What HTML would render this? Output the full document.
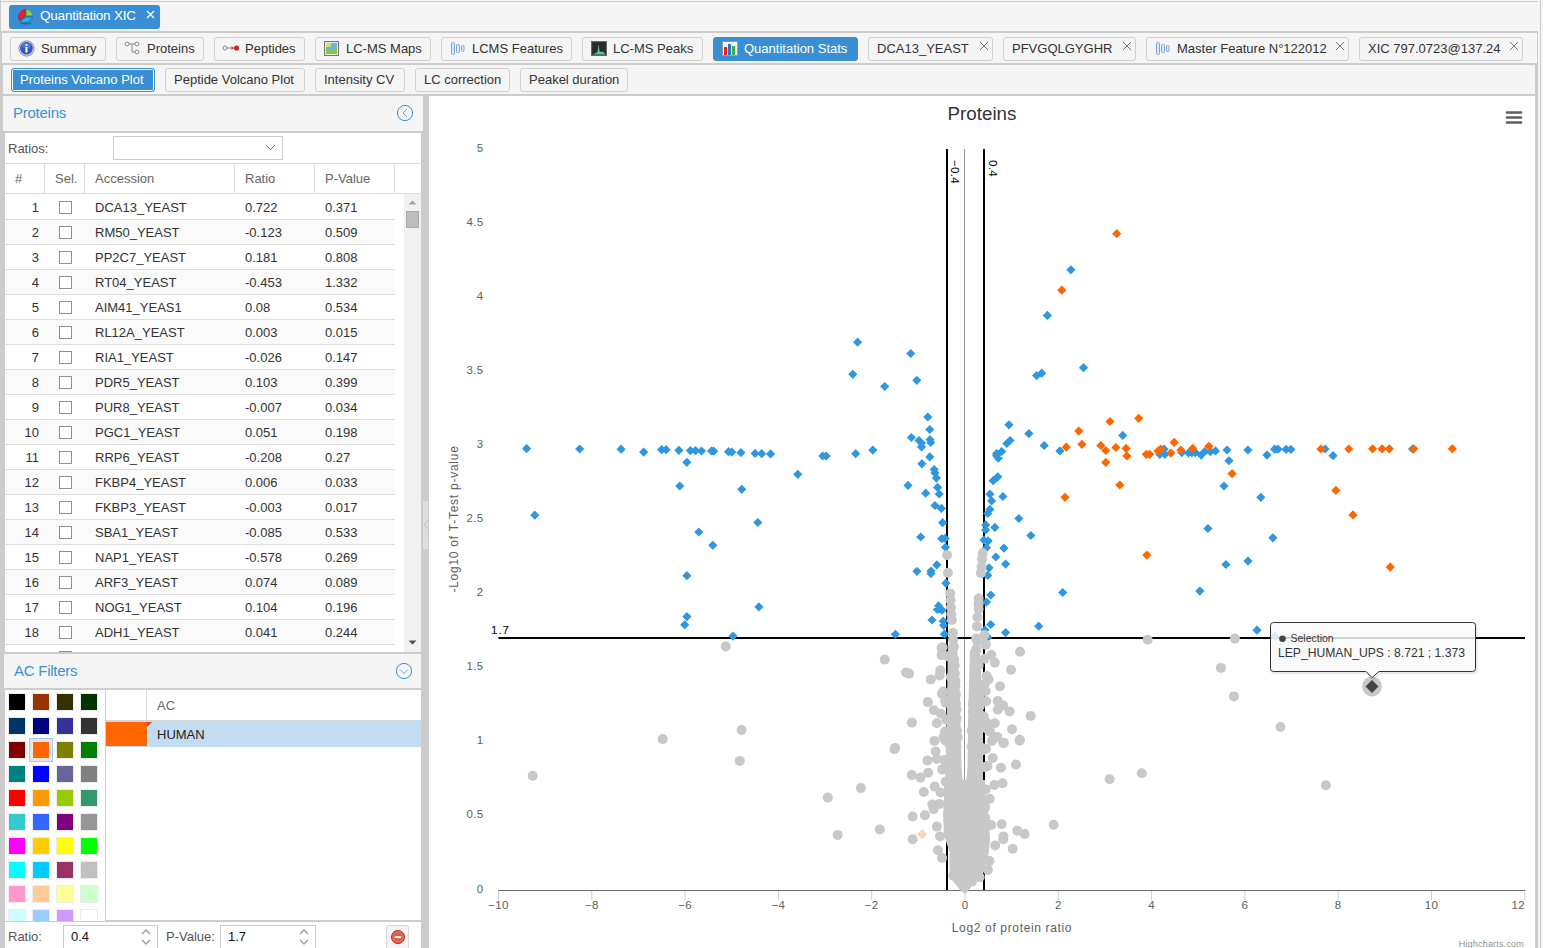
<!DOCTYPE html><html><head><meta charset="utf-8"><style>
*{box-sizing:border-box;margin:0;padding:0}
body{width:1543px;height:948px;overflow:hidden;background:#f5f5f5;font-family:"Liberation Sans",sans-serif;font-size:13px;color:#333;position:relative}
.a{position:absolute}
.btn{position:absolute;height:24px;border:1px solid #d0d0d0;border-radius:3px;background:#f5f5f5;line-height:22px;white-space:nowrap;color:#333}
.btn .t{position:absolute;top:0}
.sel{background:#3a8fd4;border-color:#3a8fd4;color:#fff}
.hl{position:absolute;background:#cccccc}
.row{position:absolute;left:5px;width:390px;height:25px;border-bottom:1px solid #dedede;line-height:26px;white-space:nowrap}
.cb{position:absolute;left:54px;top:6px;width:13px;height:13px;border:1px solid #8f8f8f;background:#fff}
.sw{position:absolute;width:16px;height:16px;box-shadow:0 0 0 1px #ececec}
.ph{position:absolute;color:#3892d3;font-size:15px;letter-spacing:-0.25px}
</style></head><body>

<div class="hl" style="left:0;top:1px;width:1538px;height:1px"></div>
<div class="hl" style="left:1540px;top:0;width:1px;height:948px"></div>
<div class="hl" style="left:0;top:0;width:1px;height:948px"></div>
<div class="hl" style="left:0;top:31px;width:1538px;height:2px"></div>
<div class="hl" style="left:1px;top:33px;width:1px;height:915px"></div>
<div class="hl" style="left:1537px;top:33px;width:1px;height:915px"></div>
<div class="hl" style="left:1px;top:63px;width:1536px;height:2px"></div>
<div class="hl" style="left:2px;top:65px;width:1px;height:883px"></div>
<div class="hl" style="left:1535px;top:65px;width:3px;height:883px"></div>
<div class="hl" style="left:2px;top:94px;width:1534px;height:2px"></div>
<div class="a" style="left:9px;top:5px;width:151px;height:24px;background:#3a8fd4;border-radius:3px"></div>
<svg class="a" style="left:17px;top:8px" width="18" height="18" viewBox="0 0 18 18">
<ellipse cx="9" cy="15.5" rx="6" ry="1.2" fill="#1d5e95" opacity=".6"/>
<path d="M8.2 1.2 L8.2 8.2 L2.2 12.6 C0.6 9.5 1.5 3.5 8.2 1.2Z" fill="#e8202a" stroke="#a10d14" stroke-width=".6"/>
<path d="M9.2 1.3 L9.2 7.8 L15.6 7.8 C15.3 4.6 13 2 9.2 1.3Z" fill="#8fd14f" stroke="#3c8d1b" stroke-width=".6"/>
<path d="M3 13.6 L9.2 9 L15.6 9 C14.8 13.3 8 16.4 3 13.6Z" fill="#2fb0e6" stroke="#0b5a9c" stroke-width=".7"/>
</svg>
<div class="a" style="left:40px;top:4px;height:24px;line-height:24px;color:#fff;font-size:13.5px;letter-spacing:-0.2px">Quantitation XIC</div>
<svg class="a" style="left:146px;top:10px" width="9" height="9" viewBox="0 0 9 9"><path d="M1 1L8 8M8 1L1 8" stroke="#fff" stroke-width="1.2"/></svg>

<div class="btn" style="left:10px;top:37px;width:96px"><span class="t" style="left:30px">Summary</span></div>
<svg class="a" style="left:18px;top:40px" width="17" height="17" viewBox="0 0 17 17"><circle cx="8.5" cy="8.5" r="7.6" fill="#ddd" stroke="#888" stroke-width="1"/><circle cx="8.5" cy="8.3" r="6.3" fill="#2f55c8"/><ellipse cx="8.5" cy="5.5" rx="4.5" ry="2.6" fill="#5f86e8" opacity=".7"/><rect x="7.5" y="7" width="2" height="5.5" fill="#fff"/><circle cx="8.5" cy="5" r="1.1" fill="#fff"/></svg>
<div class="btn" style="left:116px;top:37px;width:88px"><span class="t" style="left:30px">Proteins</span></div>
<svg class="a" style="left:124px;top:41px" width="17" height="15" viewBox="0 0 17 15"><g fill="#fff" stroke="#888" stroke-width="1"><circle cx="3" cy="3" r="2"/><circle cx="13" cy="3" r="2"/><circle cx="13" cy="11" r="2"/></g><path d="M5 3H11M8 3V11H11" stroke="#888" fill="none" stroke-width="1"/></svg>
<div class="btn" style="left:214px;top:37px;width:91px"><span class="t" style="left:30px">Peptides</span></div>
<svg class="a" style="left:222px;top:43px" width="18" height="10" viewBox="0 0 18 10"><circle cx="3" cy="5" r="2" fill="#fff" stroke="#888"/><path d="M5 5H11" stroke="#888"/><path d="M9.5 3L12 5L9.5 7Z" fill="#c33"/><circle cx="14.5" cy="5" r="2.6" fill="#d42020"/></svg>
<div class="btn" style="left:315px;top:37px;width:116px"><span class="t" style="left:30px">LC-MS Maps</span></div>
<svg class="a" style="left:324px;top:41px" width="15" height="15" viewBox="0 0 15 15"><rect x=".5" y=".5" width="14" height="14" fill="#e8e8e8" stroke="#777"/><rect x="2" y="2" width="11" height="11" fill="#6cb4e0"/><path d="M2 9 L5 7 L9 10 L13 6 V13 H2Z" fill="#8bc34a"/><rect x="2" y="2" width="5" height="4" fill="#c9e27a"/></svg>
<div class="btn" style="left:441px;top:37px;width:131px"><span class="t" style="left:30px">LCMS Features</span></div>
<svg class="a" style="left:450px;top:41px" width="15" height="15" viewBox="0 0 15 15"><g fill="#dbe8f7" stroke="#7aa3d6" stroke-width="1"><rect x="1.5" y="1.5" width="3" height="12" rx="1"/><rect x="6.5" y="3.5" width="3" height="8" rx="1"/><rect x="11.5" y="4.5" width="2.5" height="6" rx="1"/></g></svg>
<div class="btn" style="left:582px;top:37px;width:121px"><span class="t" style="left:30px">LC-MS Peaks</span></div>
<svg class="a" style="left:591px;top:41px" width="16" height="15" viewBox="0 0 16 15"><rect x=".5" y=".5" width="15" height="14" fill="#3a3a3a" stroke="#666"/><rect x="1.5" y="1.5" width="13" height="12" fill="#2a2a2a"/><path d="M1.5 13.5 L5 12 L6.5 11 L7.5 3 L8.5 10 L10 11 L12 10.5 L14.5 13.5Z" fill="#4fc9a0"/></svg>
<div class="btn sel" style="left:713px;top:37px;width:145px"><span class="t" style="left:30px">Quantitation Stats</span></div>
<svg class="a" style="left:722px;top:41px" width="16" height="15" viewBox="0 0 16 15"><rect x=".5" y=".5" width="15" height="14" fill="#f7f3e8" stroke="#9a9a9a"/><rect x="2" y="6" width="3" height="8" fill="#e02424"/><rect x="6" y="3" width="3" height="11" fill="#2f6fd0"/><rect x="10" y="5" width="3" height="9" fill="#32b54a"/></svg>
<div class="btn" style="left:868px;top:37px;width:125px"><span class="t" style="left:8px">DCA13_YEAST</span><svg class="a" style="left:110px;top:3px" width="10" height="10" viewBox="0 0 10 10"><path d="M1 1L9 9M9 1L1 9" stroke="#666" stroke-width="0.9"/></svg></div>
<div class="btn" style="left:1003px;top:37px;width:133px"><span class="t" style="left:8px">PFVGQLGYGHR</span><svg class="a" style="left:118px;top:3px" width="10" height="10" viewBox="0 0 10 10"><path d="M1 1L9 9M9 1L1 9" stroke="#666" stroke-width="0.9"/></svg></div>
<div class="btn" style="left:1146px;top:37px;width:203px"><span class="t" style="left:30px">Master Feature N°122012</span><svg class="a" style="left:188px;top:3px" width="10" height="10" viewBox="0 0 10 10"><path d="M1 1L9 9M9 1L1 9" stroke="#666" stroke-width="0.9"/></svg></div>
<svg class="a" style="left:1155px;top:41px" width="15" height="15" viewBox="0 0 15 15"><g fill="#dbe8f7" stroke="#7aa3d6" stroke-width="1"><rect x="1.5" y="1.5" width="3" height="12" rx="1"/><rect x="6.5" y="3.5" width="3" height="8" rx="1"/><rect x="11.5" y="4.5" width="2.5" height="6" rx="1"/></g></svg>
<div class="btn" style="left:1359px;top:37px;width:164px"><span class="t" style="left:8px">XIC 797.0723@137.24</span><svg class="a" style="left:149px;top:3px" width="10" height="10" viewBox="0 0 10 10"><path d="M1 1L9 9M9 1L1 9" stroke="#666" stroke-width="0.9"/></svg></div>
<div class="a" style="left:11px;top:68px;width:144px;height:24px;border:1px solid #3a8fd4;border-radius:3px;background:#3a8fd4;box-shadow:inset 0 0 0 1px #fff"><div class="a" style="left:1px;top:1px;right:1px;bottom:1px;background:#3a8fd4;border-radius:1px"></div><span class="a" style="left:8px;top:0;line-height:22px;color:#fff">Proteins Volcano Plot</span></div>
<div class="btn" style="left:165px;top:68px;width:140px"><span class="t" style="left:8px">Peptide Volcano Plot</span></div>
<div class="btn" style="left:315px;top:68px;width:90px"><span class="t" style="left:8px">Intensity CV</span></div>
<div class="btn" style="left:415px;top:68px;width:95px"><span class="t" style="left:8px">LC correction</span></div>
<div class="btn" style="left:520px;top:68px;width:108px"><span class="t" style="left:8px">Peakel duration</span></div>
<div class="a" style="left:3px;top:96px;width:420px;height:35px;background:#f5f5f5"></div>
<div class="ph" style="left:13px;top:104px">Proteins</div>
<svg class="a" style="left:396px;top:104px" width="18" height="18" viewBox="0 0 18 18"><circle cx="9" cy="9" r="7.6" fill="none" stroke="#3a8fd4" stroke-width="1"/><path d="M11 5 L7 9 L11 13" fill="none" stroke="#4a94d6" stroke-width="0.8"/></svg>
<div class="hl" style="left:3px;top:131px;width:420px;height:2px"></div>
<div class="hl" style="left:421px;top:131px;width:8px;height:817px"></div>
<div class="hl" style="left:423px;top:96px;width:6px;height:36px"></div>
<div class="a" style="left:423px;top:501px;width:5px;height:48px;background:#dedede"></div>
<svg class="a" style="left:424px;top:520px" width="4" height="9"><path d="M3.5 0.5L0.5 4.5L3.5 8.5" fill="none" stroke="#aaa" stroke-width="0.8"/></svg>
<div class="hl" style="left:3px;top:131px;width:2px;height:817px"></div>
<div class="a" style="left:5px;top:133px;width:416px;height:519px;background:#fff"></div>
<div class="a" style="left:8px;top:133px;line-height:31px;color:#555">Ratios:</div>
<div class="a" style="left:113px;top:136px;width:170px;height:24px;border:1px solid #ccc;background:#fff"></div>
<svg class="a" style="left:265px;top:144px" width="11" height="7" viewBox="0 0 11 7"><path d="M1 1 L5.5 5.5 L10 1" fill="none" stroke="#777" stroke-width="1"/></svg>
<div class="hl" style="left:5px;top:163px;width:416px;height:1px;background:#dcdcdc"></div>
<div class="hl" style="left:5px;top:193px;width:416px;height:1px;background:#dcdcdc"></div>
<div class="hl" style="left:44px;top:164px;width:1px;height:29px;background:#dcdcdc"></div>
<div class="hl" style="left:84px;top:164px;width:1px;height:29px;background:#dcdcdc"></div>
<div class="hl" style="left:234px;top:164px;width:1px;height:29px;background:#dcdcdc"></div>
<div class="hl" style="left:314px;top:164px;width:1px;height:29px;background:#dcdcdc"></div>
<div class="hl" style="left:394px;top:164px;width:1px;height:29px;background:#dcdcdc"></div>
<div class="a" style="left:15px;top:164px;line-height:29px;color:#666">#</div>
<div class="a" style="left:55px;top:164px;line-height:29px;color:#666">Sel.</div>
<div class="a" style="left:95px;top:164px;line-height:29px;color:#666">Accession</div>
<div class="a" style="left:245px;top:164px;line-height:29px;color:#666">Ratio</div>
<div class="a" style="left:325px;top:164px;line-height:29px;color:#666">P-Value</div>
<div class="a" style="left:5px;top:195px;width:399px;height:457px;overflow:hidden">
<div class="row" style="left:0;top:0px;background:#fff"><span class="a" style="right:356px;top:0">1</span><div class="cb"></div><span class="a" style="left:90px">DCA13_YEAST</span><span class="a" style="left:240px">0.722</span><span class="a" style="left:320px">0.371</span></div>
<div class="row" style="left:0;top:25px;background:#fafafa"><span class="a" style="right:356px;top:0">2</span><div class="cb"></div><span class="a" style="left:90px">RM50_YEAST</span><span class="a" style="left:240px">-0.123</span><span class="a" style="left:320px">0.509</span></div>
<div class="row" style="left:0;top:50px;background:#fff"><span class="a" style="right:356px;top:0">3</span><div class="cb"></div><span class="a" style="left:90px">PP2C7_YEAST</span><span class="a" style="left:240px">0.181</span><span class="a" style="left:320px">0.808</span></div>
<div class="row" style="left:0;top:75px;background:#fafafa"><span class="a" style="right:356px;top:0">4</span><div class="cb"></div><span class="a" style="left:90px">RT04_YEAST</span><span class="a" style="left:240px">-0.453</span><span class="a" style="left:320px">1.332</span></div>
<div class="row" style="left:0;top:100px;background:#fff"><span class="a" style="right:356px;top:0">5</span><div class="cb"></div><span class="a" style="left:90px">AIM41_YEAS1</span><span class="a" style="left:240px">0.08</span><span class="a" style="left:320px">0.534</span></div>
<div class="row" style="left:0;top:125px;background:#fafafa"><span class="a" style="right:356px;top:0">6</span><div class="cb"></div><span class="a" style="left:90px">RL12A_YEAST</span><span class="a" style="left:240px">0.003</span><span class="a" style="left:320px">0.015</span></div>
<div class="row" style="left:0;top:150px;background:#fff"><span class="a" style="right:356px;top:0">7</span><div class="cb"></div><span class="a" style="left:90px">RIA1_YEAST</span><span class="a" style="left:240px">-0.026</span><span class="a" style="left:320px">0.147</span></div>
<div class="row" style="left:0;top:175px;background:#fafafa"><span class="a" style="right:356px;top:0">8</span><div class="cb"></div><span class="a" style="left:90px">PDR5_YEAST</span><span class="a" style="left:240px">0.103</span><span class="a" style="left:320px">0.399</span></div>
<div class="row" style="left:0;top:200px;background:#fff"><span class="a" style="right:356px;top:0">9</span><div class="cb"></div><span class="a" style="left:90px">PUR8_YEAST</span><span class="a" style="left:240px">-0.007</span><span class="a" style="left:320px">0.034</span></div>
<div class="row" style="left:0;top:225px;background:#fafafa"><span class="a" style="right:356px;top:0">10</span><div class="cb"></div><span class="a" style="left:90px">PGC1_YEAST</span><span class="a" style="left:240px">0.051</span><span class="a" style="left:320px">0.198</span></div>
<div class="row" style="left:0;top:250px;background:#fff"><span class="a" style="right:356px;top:0">11</span><div class="cb"></div><span class="a" style="left:90px">RRP6_YEAST</span><span class="a" style="left:240px">-0.208</span><span class="a" style="left:320px">0.27</span></div>
<div class="row" style="left:0;top:275px;background:#fafafa"><span class="a" style="right:356px;top:0">12</span><div class="cb"></div><span class="a" style="left:90px">FKBP4_YEAST</span><span class="a" style="left:240px">0.006</span><span class="a" style="left:320px">0.033</span></div>
<div class="row" style="left:0;top:300px;background:#fff"><span class="a" style="right:356px;top:0">13</span><div class="cb"></div><span class="a" style="left:90px">FKBP3_YEAST</span><span class="a" style="left:240px">-0.003</span><span class="a" style="left:320px">0.017</span></div>
<div class="row" style="left:0;top:325px;background:#fafafa"><span class="a" style="right:356px;top:0">14</span><div class="cb"></div><span class="a" style="left:90px">SBA1_YEAST</span><span class="a" style="left:240px">-0.085</span><span class="a" style="left:320px">0.533</span></div>
<div class="row" style="left:0;top:350px;background:#fff"><span class="a" style="right:356px;top:0">15</span><div class="cb"></div><span class="a" style="left:90px">NAP1_YEAST</span><span class="a" style="left:240px">-0.578</span><span class="a" style="left:320px">0.269</span></div>
<div class="row" style="left:0;top:375px;background:#fafafa"><span class="a" style="right:356px;top:0">16</span><div class="cb"></div><span class="a" style="left:90px">ARF3_YEAST</span><span class="a" style="left:240px">0.074</span><span class="a" style="left:320px">0.089</span></div>
<div class="row" style="left:0;top:400px;background:#fff"><span class="a" style="right:356px;top:0">17</span><div class="cb"></div><span class="a" style="left:90px">NOG1_YEAST</span><span class="a" style="left:240px">0.104</span><span class="a" style="left:320px">0.196</span></div>
<div class="row" style="left:0;top:425px;background:#fafafa"><span class="a" style="right:356px;top:0">18</span><div class="cb"></div><span class="a" style="left:90px">ADH1_YEAST</span><span class="a" style="left:240px">0.041</span><span class="a" style="left:320px">0.244</span></div>
<div class="row" style="left:0;top:450px;background:#fff"><span class="a" style="right:356px;top:0"></span><div class="cb"></div><span class="a" style="left:90px"></span><span class="a" style="left:240px"></span><span class="a" style="left:320px"></span></div>
</div>
<div class="a" style="left:404px;top:194px;width:17px;height:458px;background:#f1f1f1"></div>
<svg class="a" style="left:408px;top:200px" width="9" height="5" viewBox="0 0 9 5"><path d="M0.5 4.5 L4.5 0.5 L8.5 4.5Z" fill="#a3a3a3"/></svg>
<svg class="a" style="left:408px;top:640px" width="9" height="5" viewBox="0 0 9 5"><path d="M0.5 0.5 L4.5 4.5 L8.5 0.5Z" fill="#505050"/></svg>
<div class="a" style="left:406px;top:211px;width:13px;height:17px;background:#bdbdbd;border:1px solid #a8a8a8"></div>
<div class="hl" style="left:3px;top:652px;width:420px;height:2px"></div>
<div class="a" style="left:4px;top:654px;width:417px;height:34px;background:#f5f5f5"></div>
<div class="ph" style="left:14px;top:662px">AC Filters</div>
<svg class="a" style="left:395px;top:662px" width="18" height="18" viewBox="0 0 18 18"><circle cx="9" cy="9" r="7.6" fill="none" stroke="#3a8fd4" stroke-width="1"/><path d="M5 7.5 L9 11.5 L13 7.5" fill="none" stroke="#4a94d6" stroke-width="0.8"/></svg>
<div class="hl" style="left:4px;top:688px;width:417px;height:2px"></div>
<div class="a" style="left:5px;top:690px;width:416px;height:231px;background:#fff"></div>
<div class="hl" style="left:105px;top:690px;width:1px;height:231px"></div>
<div class="a" style="left:5px;top:690px;width:100px;height:231px;overflow:hidden">
<div class="sw" style="left:4px;top:4px;background:#000000"></div>
<div class="sw" style="left:28px;top:4px;background:#993300"></div>
<div class="sw" style="left:52px;top:4px;background:#333300"></div>
<div class="sw" style="left:76px;top:4px;background:#003300"></div>
<div class="sw" style="left:4px;top:28px;background:#003366"></div>
<div class="sw" style="left:28px;top:28px;background:#000080"></div>
<div class="sw" style="left:52px;top:28px;background:#333399"></div>
<div class="sw" style="left:76px;top:28px;background:#333333"></div>
<div class="sw" style="left:4px;top:52px;background:#800000"></div>
<div class="a" style="left:24px;top:48px;width:24px;height:24px;border:1px solid #a9c9ef;background:#e6e6e6"></div>
<div class="sw" style="left:28px;top:52px;background:#FF6600"></div>
<div class="sw" style="left:52px;top:52px;background:#808000"></div>
<div class="sw" style="left:76px;top:52px;background:#008000"></div>
<div class="sw" style="left:4px;top:76px;background:#008080"></div>
<div class="sw" style="left:28px;top:76px;background:#0000FF"></div>
<div class="sw" style="left:52px;top:76px;background:#666699"></div>
<div class="sw" style="left:76px;top:76px;background:#808080"></div>
<div class="sw" style="left:4px;top:100px;background:#FF0000"></div>
<div class="sw" style="left:28px;top:100px;background:#FF9900"></div>
<div class="sw" style="left:52px;top:100px;background:#99CC00"></div>
<div class="sw" style="left:76px;top:100px;background:#339966"></div>
<div class="sw" style="left:4px;top:124px;background:#33CCCC"></div>
<div class="sw" style="left:28px;top:124px;background:#3366FF"></div>
<div class="sw" style="left:52px;top:124px;background:#800080"></div>
<div class="sw" style="left:76px;top:124px;background:#969696"></div>
<div class="sw" style="left:4px;top:148px;background:#FF00FF"></div>
<div class="sw" style="left:28px;top:148px;background:#FFCC00"></div>
<div class="sw" style="left:52px;top:148px;background:#FFFF00"></div>
<div class="sw" style="left:76px;top:148px;background:#00FF00"></div>
<div class="sw" style="left:4px;top:172px;background:#00FFFF"></div>
<div class="sw" style="left:28px;top:172px;background:#00CCFF"></div>
<div class="sw" style="left:52px;top:172px;background:#993366"></div>
<div class="sw" style="left:76px;top:172px;background:#C0C0C0"></div>
<div class="sw" style="left:4px;top:196px;background:#FF99CC"></div>
<div class="sw" style="left:28px;top:196px;background:#FFCC99"></div>
<div class="sw" style="left:52px;top:196px;background:#FFFF99"></div>
<div class="sw" style="left:76px;top:196px;background:#CCFFCC"></div>
<div class="sw" style="left:4px;top:220px;background:#CCFFFF"></div>
<div class="sw" style="left:28px;top:220px;background:#99CCFF"></div>
<div class="sw" style="left:52px;top:220px;background:#CC99FF"></div>
<div class="sw" style="left:76px;top:220px;background:#FFFFFF"></div>
</div>
<div class="hl" style="left:146px;top:690px;width:1px;height:31px;background:#dcdcdc"></div>
<div class="a" style="left:157px;top:690px;line-height:31px;color:#666">AC</div>
<div class="hl" style="left:106px;top:720px;width:315px;height:1px;background:#d6d6d6"></div>
<div class="a" style="left:106px;top:721px;width:315px;height:26px;background:#c2dcf2"></div>
<div class="a" style="left:106px;top:722px;width:41px;height:24px;background:#ff6600"></div>
<svg class="a" style="left:147px;top:722px" width="6" height="6"><path d="M0 0H5L0 5Z" fill="#d9452f"/></svg>
<div class="a" style="left:157px;top:722px;line-height:25px;color:#222">HUMAN</div>
<div class="hl" style="left:106px;top:920px;width:315px;height:1px"></div>
<div class="hl" style="left:5px;top:921px;width:416px;height:1px"></div>
<div class="a" style="left:5px;top:922px;width:416px;height:26px;background:#fff"></div>
<div class="a" style="left:8px;top:926px;line-height:22px;color:#555">Ratio:</div>
<div class="a" style="left:63px;top:925px;width:95px;height:26px;border:1px solid #c8c8c8;background:#fff"></div>
<div class="a" style="left:71px;top:926px;line-height:22px;color:#111">0.4</div>
<div class="a" style="left:166px;top:926px;line-height:22px;color:#555">P-Value:</div>
<div class="a" style="left:220px;top:925px;width:96px;height:26px;border:1px solid #c8c8c8;background:#fff"></div>
<div class="a" style="left:228px;top:926px;line-height:22px;color:#111">1.7</div>
<svg class="a" style="left:141px;top:929px" width="10" height="17" viewBox="0 0 10 17"><path d="M1 5 L5 1 L9 5 M1 11 L5 15 L9 11" fill="none" stroke="#9a9a9a" stroke-width="1.3"/></svg>
<svg class="a" style="left:299px;top:929px" width="10" height="17" viewBox="0 0 10 17"><path d="M1 5 L5 1 L9 5 M1 11 L5 15 L9 11" fill="none" stroke="#9a9a9a" stroke-width="1.3"/></svg>
<div class="a" style="left:386px;top:925px;width:23px;height:26px;border:1px solid #d6d6d6;border-radius:3px;background:#f4f4f4"></div>
<svg class="a" style="left:389px;top:929px" width="17" height="17" viewBox="0 0 17 17"><circle cx="9" cy="8" r="6.6" fill="#e65545" stroke="#c0392b" stroke-width="1"/><circle cx="9" cy="8" r="5" fill="none" stroke="#f08a7e" stroke-width=".6"/><rect x="5.8" y="7" width="6.4" height="2.2" rx=".6" fill="#fff"/></svg>
<div class="a" style="left:429px;top:96px;width:1106px;height:852px;background:#fff"></div>
<svg class="a" style="left:429px;top:96px" width="1106" height="852" viewBox="429 96 1106 852" font-family="Liberation Sans, sans-serif">
<text x="982" y="120" text-anchor="middle" font-size="18.8" fill="#333">Proteins</text>
<g stroke="#606060" stroke-width="2.7" stroke-linecap="round"><path d="M1507 112.5H1521M1507 117.5H1521M1507 122.5H1521"/></g>
<path d="M498.5 890V900" stroke="#C0D0E0" stroke-width="1"/>
<text x="498.5" y="909" text-anchor="middle" font-size="11.5" letter-spacing="0.3" fill="#606060">−10</text>
<path d="M591.8 890V900" stroke="#C0D0E0" stroke-width="1"/>
<text x="591.8" y="909" text-anchor="middle" font-size="11.5" letter-spacing="0.3" fill="#606060">−8</text>
<path d="M685.1 890V900" stroke="#C0D0E0" stroke-width="1"/>
<text x="685.1" y="909" text-anchor="middle" font-size="11.5" letter-spacing="0.3" fill="#606060">−6</text>
<path d="M778.4 890V900" stroke="#C0D0E0" stroke-width="1"/>
<text x="778.4" y="909" text-anchor="middle" font-size="11.5" letter-spacing="0.3" fill="#606060">−4</text>
<path d="M871.7 890V900" stroke="#C0D0E0" stroke-width="1"/>
<text x="871.7" y="909" text-anchor="middle" font-size="11.5" letter-spacing="0.3" fill="#606060">−2</text>
<path d="M965.0 890V900" stroke="#C0D0E0" stroke-width="1"/>
<text x="965.0" y="909" text-anchor="middle" font-size="11.5" letter-spacing="0.3" fill="#606060">0</text>
<path d="M1058.3 890V900" stroke="#C0D0E0" stroke-width="1"/>
<text x="1058.3" y="909" text-anchor="middle" font-size="11.5" letter-spacing="0.3" fill="#606060">2</text>
<path d="M1151.6 890V900" stroke="#C0D0E0" stroke-width="1"/>
<text x="1151.6" y="909" text-anchor="middle" font-size="11.5" letter-spacing="0.3" fill="#606060">4</text>
<path d="M1244.9 890V900" stroke="#C0D0E0" stroke-width="1"/>
<text x="1244.9" y="909" text-anchor="middle" font-size="11.5" letter-spacing="0.3" fill="#606060">6</text>
<path d="M1338.2 890V900" stroke="#C0D0E0" stroke-width="1"/>
<text x="1338.2" y="909" text-anchor="middle" font-size="11.5" letter-spacing="0.3" fill="#606060">8</text>
<path d="M1431.5 890V900" stroke="#C0D0E0" stroke-width="1"/>
<text x="1431.5" y="909" text-anchor="middle" font-size="11.5" letter-spacing="0.3" fill="#606060">10</text>
<path d="M1524.8 890V900" stroke="#C0D0E0" stroke-width="1"/>
<text x="1525.0" y="909" text-anchor="end" font-size="11.5" letter-spacing="0.3" fill="#606060">12</text>
<text x="483.5" y="892.5" text-anchor="end" font-size="11.5" letter-spacing="0.3" fill="#606060">0</text>
<text x="483.5" y="818.4" text-anchor="end" font-size="11.5" letter-spacing="0.3" fill="#606060">0.5</text>
<text x="483.5" y="744.3" text-anchor="end" font-size="11.5" letter-spacing="0.3" fill="#606060">1</text>
<text x="483.5" y="670.2" text-anchor="end" font-size="11.5" letter-spacing="0.3" fill="#606060">1.5</text>
<text x="483.5" y="596.1" text-anchor="end" font-size="11.5" letter-spacing="0.3" fill="#606060">2</text>
<text x="483.5" y="522.0" text-anchor="end" font-size="11.5" letter-spacing="0.3" fill="#606060">2.5</text>
<text x="483.5" y="447.9" text-anchor="end" font-size="11.5" letter-spacing="0.3" fill="#606060">3</text>
<text x="483.5" y="373.8" text-anchor="end" font-size="11.5" letter-spacing="0.3" fill="#606060">3.5</text>
<text x="483.5" y="299.7" text-anchor="end" font-size="11.5" letter-spacing="0.3" fill="#606060">4</text>
<text x="483.5" y="225.6" text-anchor="end" font-size="11.5" letter-spacing="0.3" fill="#606060">4.5</text>
<text x="483.5" y="151.5" text-anchor="end" font-size="11.5" letter-spacing="0.3" fill="#606060">5</text>
<text x="1012" y="932" text-anchor="middle" font-size="12" letter-spacing="0.65" fill="#606060">Log2 of protein ratio</text>
<text transform="translate(457.5 519) rotate(-90)" text-anchor="middle" font-size="12" letter-spacing="0.75" fill="#606060">-Log10 of T-Test p-value</text>
<text x="1524" y="947" text-anchor="end" font-size="9" letter-spacing="0.2" fill="#909090">Highcharts.com</text>
<path d="M964.5 149V890" stroke="#999" stroke-width="1"/>
<path d="M947 149V890M984 149V890" stroke="#000" stroke-width="2"/>
<path d="M498.5 638H1525" stroke="#000" stroke-width="2"/>
<text transform="translate(951.2 160) rotate(90)" font-size="11.5" letter-spacing="0.3" fill="#000">−0.4</text>
<text transform="translate(988.5 160) rotate(90)" font-size="11.5" letter-spacing="0.3" fill="#000">0.4</text>
<text x="491" y="634" font-size="11.5" letter-spacing="1" fill="#000">1.7</text>
<path d="M498.5 890.5H1525" stroke="#6a6a6a" stroke-width="1.1"/>
<path fill="#2f97e0" d="M1070.9 265.2L1075.5 269.8L1070.9 274.4L1066.3 269.8ZM1047.4 310.8L1052.0 315.4L1047.4 320.0L1042.8 315.4ZM857.6 337.6L862.2 342.2L857.6 346.8L853.0 342.2ZM910.8 348.9L915.4 353.5L910.8 358.1L906.2 353.5ZM852.8 369.7L857.4 374.3L852.8 378.9L848.2 374.3ZM884.7 381.9L889.3 386.5L884.7 391.1L880.1 386.5ZM916.8 375.7L921.4 380.3L916.8 384.9L912.2 380.3ZM927.8 412.4L932.4 417.0L927.8 421.6L923.2 417.0ZM1036.6 371.0L1041.2 375.6L1036.6 380.2L1032.0 375.6ZM1041.7 368.6L1046.3 373.2L1041.7 377.8L1037.1 373.2ZM1083.5 363.1L1088.1 367.7L1083.5 372.3L1078.9 367.7ZM526.6 444.0L531.2 448.6L526.6 453.2L522.0 448.6ZM579.7 444.4L584.3 449.0L579.7 453.6L575.1 449.0ZM621.1 444.6L625.7 449.2L621.1 453.8L616.5 449.2ZM643.7 447.5L648.3 452.1L643.7 456.7L639.1 452.1ZM661.6 445.1L666.2 449.7L661.6 454.3L657.0 449.7ZM666.1 445.1L670.7 449.7L666.1 454.3L661.5 449.7ZM678.9 445.7L683.5 450.3L678.9 454.9L674.3 450.3ZM690.4 446.0L695.0 450.6L690.4 455.2L685.8 450.6ZM695.5 446.0L700.1 450.6L695.5 455.2L690.9 450.6ZM701.5 446.4L706.1 451.0L701.5 455.6L696.9 451.0ZM711.5 446.4L716.1 451.0L711.5 455.6L706.9 451.0ZM713.7 446.6L718.3 451.2L713.7 455.8L709.1 451.2ZM728.5 447.1L733.1 451.7L728.5 456.3L723.9 451.7ZM731.8 447.5L736.4 452.1L731.8 456.7L727.2 452.1ZM740.9 448.0L745.5 452.6L740.9 457.2L736.3 452.6ZM755.1 448.8L759.7 453.4L755.1 458.0L750.5 453.4ZM761.7 449.1L766.3 453.7L761.7 458.3L757.1 453.7ZM770.6 449.3L775.2 453.9L770.6 458.5L766.0 453.9ZM686.9 457.7L691.5 462.3L686.9 466.9L682.3 462.3ZM797.8 469.7L802.4 474.3L797.8 478.9L793.2 474.3ZM679.8 481.4L684.4 486.0L679.8 490.6L675.2 486.0ZM741.8 484.7L746.4 489.3L741.8 493.9L737.2 489.3ZM534.8 510.6L539.4 515.2L534.8 519.8L530.2 515.2ZM757.8 517.9L762.4 522.5L757.8 527.1L753.2 522.5ZM698.8 527.4L703.4 532.0L698.8 536.6L694.2 532.0ZM712.8 540.7L717.4 545.3L712.8 549.9L708.2 545.3ZM686.9 571.1L691.5 575.7L686.9 580.3L682.3 575.7ZM758.9 602.3L763.5 606.9L758.9 611.5L754.3 606.9ZM686.9 612.0L691.5 616.6L686.9 621.2L682.3 616.6ZM684.7 620.2L689.3 624.8L684.7 629.4L680.1 624.8ZM822.8 451.4L827.4 456.0L822.8 460.6L818.2 456.0ZM826.2 451.4L830.8 456.0L826.2 460.6L821.6 456.0ZM855.7 449.1L860.3 453.7L855.7 458.3L851.1 453.7ZM872.9 445.5L877.5 450.1L872.9 454.7L868.3 450.1ZM929.8 424.9L934.4 429.5L929.8 434.1L925.2 429.5ZM911.4 432.9L916.0 437.5L911.4 442.1L906.8 437.5ZM919.0 435.9L923.6 440.5L919.0 445.1L914.4 440.5ZM921.5 438.4L926.1 443.0L921.5 447.6L916.9 443.0ZM921.5 442.3L926.1 446.9L921.5 451.5L916.9 446.9ZM930.0 435.1L934.6 439.7L930.0 444.3L925.4 439.7ZM930.8 437.9L935.4 442.5L930.8 447.1L926.2 442.5ZM929.8 452.3L934.4 456.9L929.8 461.5L925.2 456.9ZM921.9 459.2L926.5 463.8L921.9 468.4L917.3 463.8ZM934.2 464.9L938.8 469.5L934.2 474.1L929.6 469.5ZM935.0 468.3L939.6 472.9L935.0 477.5L930.4 472.9ZM936.4 473.5L941.0 478.1L936.4 482.7L931.8 478.1ZM908.0 480.8L912.6 485.4L908.0 490.0L903.4 485.4ZM937.6 482.8L942.2 487.4L937.6 492.0L933.0 487.4ZM939.2 489.4L943.8 494.0L939.2 498.6L934.6 494.0ZM925.7 488.6L930.3 493.2L925.7 497.8L921.1 493.2ZM935.0 500.9L939.6 505.5L935.0 510.1L930.4 505.5ZM941.4 503.8L946.0 508.4L941.4 513.0L936.8 508.4ZM942.6 518.1L947.2 522.7L942.6 527.3L938.0 522.7ZM920.7 532.4L925.3 537.0L920.7 541.6L916.1 537.0ZM941.8 534.1L946.4 538.7L941.8 543.3L937.2 538.7ZM945.1 533.8L949.7 538.4L945.1 543.0L940.5 538.4ZM945.5 542.7L950.1 547.3L945.5 551.9L940.9 547.3ZM1008.9 420.2L1013.5 424.8L1008.9 429.4L1004.3 424.8ZM1028.9 429.0L1033.5 433.6L1028.9 438.2L1024.3 433.6ZM1010.1 435.9L1014.7 440.5L1010.1 445.1L1005.5 440.5ZM1006.8 438.9L1011.4 443.5L1006.8 448.1L1002.2 443.5ZM1001.7 446.9L1006.3 451.5L1001.7 456.1L997.1 451.5ZM996.6 449.1L1001.2 453.7L996.6 458.3L992.0 453.7ZM998.3 453.6L1002.9 458.2L998.3 462.8L993.7 458.2ZM996.6 451.1L1001.2 455.7L996.6 460.3L992.0 455.7ZM997.8 472.2L1002.4 476.8L997.8 481.4L993.2 476.8ZM993.2 476.1L997.8 480.7L993.2 485.3L988.6 480.7ZM989.9 489.6L994.5 494.2L989.9 498.8L985.3 494.2ZM991.6 496.3L996.2 500.9L991.6 505.5L987.0 500.9ZM1002.9 491.9L1007.5 496.5L1002.9 501.1L998.3 496.5ZM989.9 504.8L994.5 509.4L989.9 514.0L985.3 509.4ZM987.7 508.8L992.3 513.4L987.7 518.0L983.1 513.4ZM1018.9 513.9L1023.5 518.5L1018.9 523.1L1014.3 518.5ZM985.7 520.3L990.3 524.9L985.7 529.5L981.1 524.9ZM985.7 525.4L990.3 530.0L985.7 534.6L981.1 530.0ZM994.9 522.8L999.5 527.4L994.9 532.0L990.3 527.4ZM1030.9 530.9L1035.5 535.5L1030.9 540.1L1026.3 535.5ZM984.0 535.5L988.6 540.1L984.0 544.7L979.4 540.1ZM988.2 536.3L992.8 540.9L988.2 545.5L983.6 540.9ZM986.5 543.1L991.1 547.7L986.5 552.3L981.9 547.7ZM1003.9 543.6L1008.5 548.2L1003.9 552.8L999.3 548.2ZM995.8 552.4L1000.4 557.0L995.8 561.6L991.2 557.0ZM1044.2 440.9L1048.8 445.5L1044.2 450.1L1039.6 445.5ZM1059.9 446.3L1064.5 450.9L1059.9 455.5L1055.3 450.9ZM1122.7 430.8L1127.3 435.4L1122.7 440.0L1118.1 435.4ZM1164.1 444.6L1168.7 449.2L1164.1 453.8L1159.5 449.2ZM1159.8 449.7L1164.4 454.3L1159.8 458.9L1155.2 454.3ZM1164.9 449.7L1169.5 454.3L1164.9 458.9L1160.3 454.3ZM1181.8 448.0L1186.4 452.6L1181.8 457.2L1177.2 452.6ZM1188.5 448.3L1193.1 452.9L1188.5 457.5L1183.9 452.9ZM1191.9 448.0L1196.5 452.6L1191.9 457.2L1187.3 452.6ZM1195.3 448.0L1199.9 452.6L1195.3 457.2L1190.7 452.6ZM1201.2 450.5L1205.8 455.1L1201.2 459.7L1196.6 455.1ZM1204.6 447.1L1209.2 451.7L1204.6 456.3L1200.0 451.7ZM1210.5 447.1L1215.1 451.7L1210.5 456.3L1205.9 451.7ZM1215.5 446.3L1220.1 450.9L1215.5 455.5L1210.9 450.9ZM1227.0 445.4L1231.6 450.0L1227.0 454.6L1222.4 450.0ZM1229.0 456.1L1233.6 460.7L1229.0 465.3L1224.4 460.7ZM1247.9 445.4L1252.5 450.0L1247.9 454.6L1243.3 450.0ZM1267.0 450.5L1271.6 455.1L1267.0 459.7L1262.4 455.1ZM1274.6 444.6L1279.2 449.2L1274.6 453.8L1270.0 449.2ZM1278.0 444.6L1282.6 449.2L1278.0 453.8L1273.4 449.2ZM1224.0 481.4L1228.6 486.0L1224.0 490.6L1219.4 486.0ZM1260.8 492.7L1265.4 497.3L1260.8 501.9L1256.2 497.3ZM1207.9 523.9L1212.5 528.5L1207.9 533.1L1203.3 528.5ZM1272.9 533.2L1277.5 537.8L1272.9 542.4L1268.3 537.8ZM1286.1 444.8L1290.7 449.4L1286.1 454.0L1281.5 449.4ZM1290.9 444.8L1295.5 449.4L1290.9 454.0L1286.3 449.4ZM1325.1 444.4L1329.7 449.0L1325.1 453.6L1320.5 449.0ZM1333.1 451.1L1337.7 455.7L1333.1 460.3L1328.5 455.7ZM1412.5 444.4L1417.1 449.0L1412.5 453.6L1407.9 449.0ZM1005.6 559.5L1010.2 564.1L1005.6 568.7L1001.0 564.1ZM1062.7 587.9L1067.3 592.5L1062.7 597.1L1058.1 592.5ZM1038.7 621.6L1043.3 626.2L1038.7 630.8L1034.1 626.2ZM1005.6 628.0L1010.2 632.6L1005.6 637.2L1001.0 632.6ZM1225.9 559.9L1230.5 564.5L1225.9 569.1L1221.3 564.5ZM1248.0 556.5L1252.6 561.1L1248.0 565.7L1243.4 561.1ZM1199.8 586.5L1204.4 591.1L1199.8 595.7L1195.2 591.1ZM1257.0 625.6L1261.6 630.2L1257.0 634.8L1252.4 630.2ZM733.0 631.5L737.6 636.1L733.0 640.7L728.4 636.1ZM895.4 629.7L900.0 634.3L895.4 638.9L890.8 634.3ZM936.8 560.3L941.4 564.9L936.8 569.5L932.2 564.9ZM916.9 566.7L921.5 571.3L916.9 575.9L912.3 571.3ZM931.0 566.5L935.6 571.1L931.0 575.7L926.4 571.1ZM931.0 569.0L935.6 573.6L931.0 578.2L926.4 573.6ZM945.9 578.6L950.5 583.2L945.9 587.8L941.3 583.2ZM938.6 601.3L943.2 605.9L938.6 610.5L934.0 605.9ZM937.4 604.8L942.0 609.4L937.4 614.0L932.8 609.4ZM942.1 605.6L946.7 610.2L942.1 614.8L937.5 610.2ZM932.0 615.4L936.6 620.0L932.0 624.6L927.4 620.0ZM943.2 616.6L947.8 621.2L943.2 625.8L938.6 621.2ZM943.6 620.7L948.2 625.3L943.6 629.9L939.0 625.3ZM944.4 629.6L949.0 634.2L944.4 638.8L939.8 634.2ZM989.0 563.2L993.6 567.8L989.0 572.4L984.4 567.8ZM987.7 570.8L992.3 575.4L987.7 580.0L983.1 575.4ZM990.8 590.5L995.4 595.1L990.8 599.7L986.2 595.1ZM986.5 597.5L991.1 602.1L986.5 606.7L981.9 602.1ZM990.8 619.9L995.4 624.5L990.8 629.1L986.2 624.5ZM985.0 625.3L989.6 629.9L985.0 634.5L980.4 629.9ZM987.9 632.8L992.5 637.4L987.9 642.0L983.3 637.4ZM1275.1 631.6L1279.7 636.2L1275.1 640.8L1270.5 636.2Z"/>
<path fill="#ff6600" d="M1116.7 229.1L1121.3 233.7L1116.7 238.3L1112.1 233.7ZM1061.8 285.6L1066.4 290.2L1061.8 294.8L1057.2 290.2ZM1138.7 413.7L1143.3 418.3L1138.7 422.9L1134.1 418.3ZM1110.0 416.9L1114.6 421.5L1110.0 426.1L1105.4 421.5ZM1078.8 426.5L1083.4 431.1L1078.8 435.7L1074.2 431.1ZM1081.9 439.7L1086.5 444.3L1081.9 448.9L1077.3 444.3ZM1066.2 442.6L1070.8 447.2L1066.2 451.8L1061.6 447.2ZM1100.8 440.9L1105.4 445.5L1100.8 450.1L1096.2 445.5ZM1105.8 445.9L1110.4 450.5L1105.8 455.1L1101.2 450.5ZM1115.9 442.9L1120.5 447.5L1115.9 452.1L1111.3 447.5ZM1126.1 443.8L1130.7 448.4L1126.1 453.0L1121.5 448.4ZM1126.9 451.4L1131.5 456.0L1126.9 460.6L1122.3 456.0ZM1105.8 457.8L1110.4 462.4L1105.8 467.0L1101.2 462.4ZM1146.3 449.7L1150.9 454.3L1146.3 458.9L1141.7 454.3ZM1149.7 449.7L1154.3 454.3L1149.7 458.9L1145.1 454.3ZM1158.1 446.3L1162.7 450.9L1158.1 455.5L1153.5 450.9ZM1160.7 444.6L1165.3 449.2L1160.7 453.8L1156.1 449.2ZM1170.8 448.5L1175.4 453.1L1170.8 457.7L1166.2 453.1ZM1174.2 437.8L1178.8 442.4L1174.2 447.0L1169.6 442.4ZM1180.9 445.4L1185.5 450.0L1180.9 454.6L1176.3 450.0ZM1192.7 443.8L1197.3 448.4L1192.7 453.0L1188.1 448.4ZM1208.8 441.7L1213.4 446.3L1208.8 450.9L1204.2 446.3ZM1232.1 469.1L1236.7 473.7L1232.1 478.3L1227.5 473.7ZM1119.8 480.4L1124.4 485.0L1119.8 489.6L1115.2 485.0ZM1065.0 492.7L1069.6 497.3L1065.0 501.9L1060.4 497.3ZM1320.9 444.4L1325.5 449.0L1320.9 453.6L1316.3 449.0ZM1348.8 444.4L1353.4 449.0L1348.8 453.6L1344.2 449.0ZM1372.6 444.2L1377.2 448.8L1372.6 453.4L1368.0 448.8ZM1382.1 444.2L1386.7 448.8L1382.1 453.4L1377.5 448.8ZM1389.3 444.2L1393.9 448.8L1389.3 453.4L1384.7 448.8ZM1413.8 444.2L1418.4 448.8L1413.8 453.4L1409.2 448.8ZM1452.3 444.2L1456.9 448.8L1452.3 453.4L1447.7 448.8ZM1335.9 485.8L1340.5 490.4L1335.9 495.0L1331.3 490.4ZM1353.0 510.3L1357.6 514.9L1353.0 519.5L1348.4 514.9ZM1390.2 562.5L1394.8 567.1L1390.2 571.7L1385.6 567.1ZM1146.9 550.5L1151.5 555.1L1146.9 559.7L1142.3 555.1Z"/>
<g fill="#c8c8c8">
<path d="M948 645 L957 645 L960 700 L961.5 768 L963.5 786 L945 786 L947 700 Z"/>
<path d="M970 650 L980 650 L982.5 700 L983 768 L983 786 L965.5 786 L967.5 768 L968.5 700 Z"/>
<path d="M944 780 L985 780 L986 800 L989 820 L990 840 L988 858 L983 872 L975 881 L969 890 L965 894 L960 890 L953 881 L949.5 870 L949.5 852 L944 835 L943 815 L944 800 Z"/>
<circle cx="945.1" cy="700.4" r="5"/>
<circle cx="946.3" cy="719.8" r="5"/>
<circle cx="945.3" cy="740.5" r="5"/>
<circle cx="944.5" cy="760.1" r="5"/>
<circle cx="945.6" cy="781.8" r="5"/>
<circle cx="984.7" cy="658.8" r="5"/>
<circle cx="984.7" cy="683.9" r="5"/>
<circle cx="986.2" cy="701.3" r="5"/>
<circle cx="987.0" cy="728.8" r="5"/>
<circle cx="986.1" cy="748.7" r="5"/>
<circle cx="984.9" cy="767.1" r="5"/>
<circle cx="985.8" cy="789.4" r="5"/>
<circle cx="1147.7" cy="639.8" r="5"/>
<circle cx="1234.9" cy="638.6" r="5"/>
<circle cx="1020.0" cy="651.7" r="5"/>
<circle cx="1011.0" cy="669.7" r="5"/>
<circle cx="1220.9" cy="667.9" r="5"/>
<circle cx="1233.9" cy="696.4" r="5"/>
<circle cx="1000.0" cy="686.3" r="5"/>
<circle cx="1003.0" cy="705.4" r="5"/>
<circle cx="1009.6" cy="711.4" r="5"/>
<circle cx="1030.7" cy="716.0" r="5"/>
<circle cx="1280.5" cy="727.0" r="5"/>
<circle cx="1109.7" cy="779.2" r="5"/>
<circle cx="1141.8" cy="773.3" r="5"/>
<circle cx="1325.9" cy="785.3" r="5"/>
<circle cx="1053.7" cy="824.8" r="5"/>
<circle cx="725.7" cy="646.5" r="5"/>
<circle cx="884.7" cy="659.6" r="5"/>
<circle cx="741.6" cy="730.0" r="5"/>
<circle cx="662.7" cy="739.1" r="5"/>
<circle cx="739.8" cy="760.9" r="5"/>
<circle cx="532.7" cy="775.8" r="5"/>
<circle cx="894.5" cy="749.2" r="5"/>
<circle cx="860.9" cy="788.1" r="5"/>
<circle cx="827.8" cy="797.6" r="5"/>
<circle cx="837.6" cy="834.9" r="5"/>
<circle cx="879.8" cy="829.4" r="5"/>
<circle cx="947.0" cy="555.1" r="5"/>
<circle cx="947.9" cy="572.8" r="5"/>
<circle cx="950.2" cy="593.4" r="5"/>
<circle cx="950.5" cy="600.3" r="5"/>
<circle cx="951.0" cy="607.3" r="5"/>
<circle cx="951.3" cy="614.2" r="5"/>
<circle cx="951.9" cy="620.0" r="5"/>
<circle cx="952.9" cy="632.8" r="5"/>
<circle cx="953.1" cy="639.8" r="5"/>
<circle cx="942.6" cy="647.3" r="5"/>
<circle cx="953.7" cy="646.7" r="5"/>
<circle cx="982.7" cy="553.3" r="5"/>
<circle cx="982.1" cy="559.1" r="5"/>
<circle cx="981.5" cy="566.7" r="5"/>
<circle cx="980.9" cy="573.1" r="5"/>
<circle cx="978.6" cy="598.6" r="5"/>
<circle cx="978.6" cy="604.4" r="5"/>
<circle cx="978.6" cy="609.0" r="5"/>
<circle cx="977.4" cy="617.1" r="5"/>
<circle cx="976.9" cy="626.4" r="5"/>
<circle cx="976.3" cy="638.6" r="5"/>
<circle cx="984.4" cy="635.1" r="5"/>
<circle cx="985.6" cy="644.4" r="5"/>
<circle cx="976.3" cy="649.0" r="5"/>
<circle cx="906.1" cy="672.5" r="5"/>
<circle cx="909.0" cy="673.6" r="5"/>
<circle cx="930.8" cy="679.4" r="5"/>
<circle cx="941.5" cy="648.1" r="5"/>
<circle cx="941.5" cy="655.1" r="5"/>
<circle cx="940.3" cy="670.2" r="5"/>
<circle cx="939.7" cy="675.4" r="5"/>
<circle cx="943.2" cy="691.6" r="5"/>
<circle cx="927.8" cy="702.1" r="5"/>
<circle cx="933.9" cy="710.2" r="5"/>
<circle cx="940.9" cy="713.7" r="5"/>
<circle cx="911.9" cy="722.6" r="5"/>
<circle cx="936.8" cy="723.3" r="5"/>
<circle cx="934.5" cy="740.9" r="5"/>
<circle cx="895.1" cy="747.9" r="5"/>
<circle cx="945.0" cy="731.6" r="5"/>
<circle cx="943.8" cy="736.9" r="5"/>
<circle cx="953.7" cy="647.0" r="5"/>
<circle cx="954.2" cy="659.7" r="5"/>
<circle cx="954.8" cy="665.5" r="5"/>
<circle cx="954.8" cy="673.6" r="5"/>
<circle cx="955.4" cy="680.6" r="5"/>
<circle cx="955.4" cy="686.4" r="5"/>
<circle cx="956.0" cy="694.5" r="5"/>
<circle cx="956.0" cy="703.8" r="5"/>
<circle cx="956.6" cy="709.6" r="5"/>
<circle cx="956.6" cy="718.9" r="5"/>
<circle cx="957.1" cy="730.5" r="5"/>
<circle cx="957.7" cy="737.4" r="5"/>
<circle cx="956.6" cy="746.7" r="5"/>
<circle cx="949.6" cy="701.5" r="5"/>
<circle cx="950.8" cy="677.1" r="5"/>
<circle cx="947.3" cy="656.2" r="5"/>
<circle cx="949.6" cy="744.4" r="5"/>
<circle cx="976.9" cy="640.6" r="5"/>
<circle cx="985.6" cy="644.6" r="5"/>
<circle cx="976.3" cy="650.4" r="5"/>
<circle cx="975.1" cy="658.6" r="5"/>
<circle cx="974.5" cy="666.7" r="5"/>
<circle cx="974.5" cy="673.6" r="5"/>
<circle cx="974.0" cy="684.1" r="5"/>
<circle cx="974.0" cy="691.0" r="5"/>
<circle cx="972.8" cy="703.8" r="5"/>
<circle cx="972.8" cy="711.9" r="5"/>
<circle cx="972.8" cy="721.2" r="5"/>
<circle cx="971.6" cy="730.5" r="5"/>
<circle cx="972.8" cy="739.8" r="5"/>
<circle cx="971.6" cy="746.7" r="5"/>
<circle cx="978.6" cy="665.5" r="5"/>
<circle cx="979.8" cy="694.5" r="5"/>
<circle cx="979.8" cy="706.1" r="5"/>
<circle cx="980.9" cy="715.4" r="5"/>
<circle cx="991.4" cy="655.1" r="5"/>
<circle cx="994.8" cy="662.6" r="5"/>
<circle cx="986.7" cy="676.0" r="5"/>
<circle cx="988.5" cy="679.4" r="5"/>
<circle cx="985.6" cy="691.0" r="5"/>
<circle cx="997.7" cy="700.9" r="5"/>
<circle cx="997.7" cy="709.6" r="5"/>
<circle cx="984.4" cy="721.2" r="5"/>
<circle cx="994.8" cy="723.3" r="5"/>
<circle cx="987.9" cy="728.2" r="5"/>
<circle cx="1012.0" cy="729.3" r="5"/>
<circle cx="997.2" cy="736.9" r="5"/>
<circle cx="991.9" cy="740.9" r="5"/>
<circle cx="1003.9" cy="742.7" r="5"/>
<circle cx="1019.8" cy="739.8" r="5"/>
<circle cx="982.1" cy="747.9" r="5"/>
<circle cx="927.4" cy="760.4" r="5"/>
<circle cx="911.9" cy="775.1" r="5"/>
<circle cx="920.5" cy="777.6" r="5"/>
<circle cx="928.2" cy="772.7" r="5"/>
<circle cx="923.8" cy="792.0" r="5"/>
<circle cx="934.7" cy="786.6" r="5"/>
<circle cx="932.3" cy="804.5" r="5"/>
<circle cx="912.7" cy="816.5" r="5"/>
<circle cx="924.9" cy="815.2" r="5"/>
<circle cx="912.7" cy="839.3" r="5"/>
<circle cx="936.9" cy="826.6" r="5"/>
<circle cx="938.0" cy="850.3" r="5"/>
<circle cx="942.1" cy="858.0" r="5"/>
<circle cx="935.6" cy="751.4" r="5"/>
<circle cx="942.1" cy="769.4" r="5"/>
<circle cx="1003.4" cy="743.3" r="5"/>
<circle cx="1019.7" cy="740.8" r="5"/>
<circle cx="1015.9" cy="764.5" r="5"/>
<circle cx="992.7" cy="758.0" r="5"/>
<circle cx="1000.9" cy="767.8" r="5"/>
<circle cx="1002.5" cy="783.3" r="5"/>
<circle cx="994.4" cy="784.9" r="5"/>
<circle cx="989.8" cy="798.8" r="5"/>
<circle cx="984.6" cy="808.6" r="5"/>
<circle cx="1001.7" cy="824.2" r="5"/>
<circle cx="991.1" cy="825.0" r="5"/>
<circle cx="1017.3" cy="830.7" r="5"/>
<circle cx="1024.6" cy="834.0" r="5"/>
<circle cx="1003.4" cy="836.4" r="5"/>
<circle cx="995.2" cy="845.4" r="5"/>
<circle cx="1012.7" cy="848.7" r="5"/>
<circle cx="989.5" cy="860.9" r="5"/>
<circle cx="987.8" cy="869.9" r="5"/>
<circle cx="979.7" cy="877.3" r="5"/>
<circle cx="936.8" cy="759.0" r="5"/>
<circle cx="943.2" cy="769.1" r="5"/>
<circle cx="940.6" cy="792.5" r="5"/>
<circle cx="939.4" cy="803.9" r="5"/>
<circle cx="947.6" cy="781.1" r="5"/>
<circle cx="944.4" cy="738.1" r="5"/>
<circle cx="941.9" cy="693.8" r="5"/>
<circle cx="945.7" cy="702.7" r="5"/>
<circle cx="983.7" cy="716.6" r="5"/>
<circle cx="986.2" cy="722.3" r="5"/>
<circle cx="990.0" cy="731.8" r="5"/>
<circle cx="983.0" cy="750.1" r="5"/>
<circle cx="987.5" cy="766.0" r="5"/>
<circle cx="984.9" cy="806.5" r="5"/>
<circle cx="933.6" cy="809.1" r="5"/>
<circle cx="940.0" cy="836.4" r="5"/>
<circle cx="953.4" cy="875.8" r="5"/>
<circle cx="985.3" cy="817.8" r="5"/>
<circle cx="1003.2" cy="839.3" r="5"/>
<circle cx="971.9" cy="881.6" r="5"/>
</g>
<path d="M922.2 829.3L927.2 834.3L922.2 839.3L917.2 834.3Z" fill="#fdd3b5"/>
<circle cx="1372" cy="686.4" r="10" fill="#c8c8c8"/>
<path d="M1372.0 679.9L1378.5 686.4L1372.0 692.9L1365.5 686.4Z" fill="#434348"/>
<path transform="translate(1 1)" d="M1273.5 622.5H1472.5Q1475.5 622.5 1475.5 625.5V668.5Q1475.5 671.5 1472.5 671.5H1379L1372 677.5L1366 671.5H1273.5Q1270.5 671.5 1270.5 668.5V625.5Q1270.5 622.5 1273.5 622.5Z" fill="none" stroke="rgba(0,0,0,0.08)" stroke-width="3"/>
<path d="M1273.5 622.5H1472.5Q1475.5 622.5 1475.5 625.5V668.5Q1475.5 671.5 1472.5 671.5H1379L1372 677.5L1366 671.5H1273.5Q1270.5 671.5 1270.5 668.5V625.5Q1270.5 622.5 1273.5 622.5Z" fill="rgba(249,249,249,0.85)" stroke="#333" stroke-width="1"/>
<circle cx="1282.5" cy="638.7" r="3.3" fill="#434348"/>
<text x="1290.5" y="642" font-size="10.5" fill="#333">Selection</text>
<text x="1278" y="656.8" font-size="12.15" fill="#333">LEP_HUMAN_UPS : 8.721 ; 1.373</text>
</svg>
</body></html>
